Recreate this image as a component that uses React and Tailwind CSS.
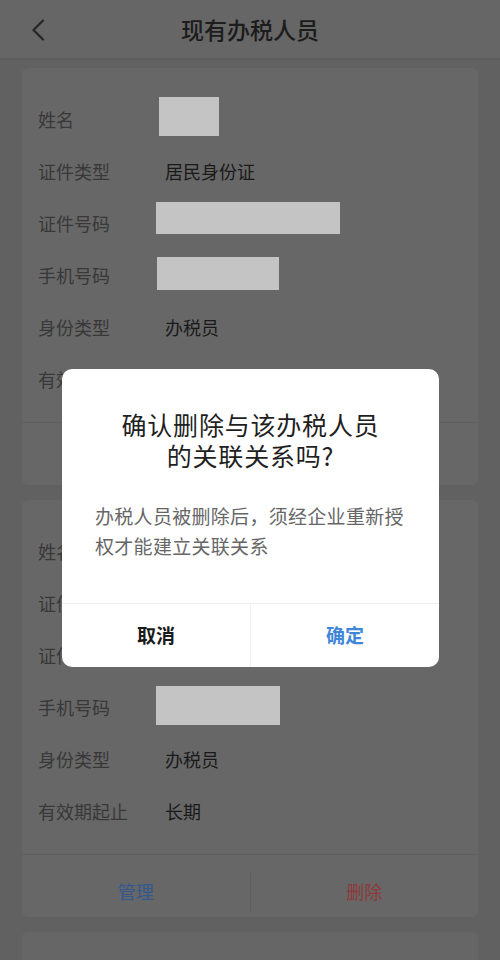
import React from "react";

const FONT = { fontFamily: '"Noto Sans CJK SC", "Noto Sans", sans-serif' };

function Row({ label, children }) {
  return (
    <div className="flex h-[52px] items-center">
      <div className="w-[127px] shrink-0 text-[18px] text-[#383838]">{label}</div>
      <div className="flex items-center text-[18px] text-[#1a1a1a]">{children}</div>
    </div>
  );
}

function Box({ className }) {
  return <div className={"bg-[#c4c4c4] " + className} />;
}

function Card({ top }) {
  return (
    <div className="mx-[22px] rounded-[6px] bg-[#676767]">
      <div className="pb-[17px] pl-[16px] pt-[25px]">{top}</div>
      <div className="flex h-[63px] items-center border-t border-[#5e5e5e] pt-[10px]">
        <div className="flex flex-1 justify-center text-[18px] text-[#33578f]">管理</div>
        <div className="h-[40px] w-px bg-[#5e5e5e]" />
        <div className="flex flex-1 justify-center text-[18px] text-[#8c3a3a]">删除</div>
      </div>
    </div>
  );
}

export default function App() {
  return (
    <div className="relative h-[960px] w-[500px] overflow-hidden bg-[#616161]" style={FONT}>
      <div className="relative flex h-[58px] items-center justify-center bg-[#666666] shadow-[0_1px_2px_rgba(0,0,0,0.08)]">
        <svg className="absolute left-[31px] top-[19px]" width="14" height="22" viewBox="0 0 14 22">
          <path d="M12 1.5 L2.5 11 L12 20.5" fill="none" stroke="#262626" strokeWidth="2.2" strokeLinecap="round" strokeLinejoin="round" />
        </svg>
        <div className="text-[23px] font-medium text-[#1c1c1c]">现有办税人员</div>
      </div>

      <div className="mt-[10px] flex flex-col gap-[15px]">
        <Card
          top={
            <>
              <Row label="姓名">
                <Box className="-ml-[6px] -mt-[5px] h-[39px] w-[60px]" />
              </Row>
              <Row label="证件类型">居民身份证</Row>
              <Row label="证件号码">
                <Box className="-ml-[9px] -mt-[10px] h-[32px] w-[184px]" />
              </Row>
              <Row label="手机号码">
                <Box className="-ml-[8px] -mt-[3px] h-[33px] w-[122px]" />
              </Row>
              <Row label="身份类型">办税员</Row>
              <Row label="有效期起止">长期</Row>
            </>
          }
        />
        <Card
          top={
            <>
              <Row label="姓名">
                <Box className="-ml-[6px] -mt-[5px] h-[39px] w-[60px]" />
              </Row>
              <Row label="证件类型">居民身份证</Row>
              <Row label="证件号码">
                <Box className="-ml-[9px] -mt-[10px] h-[32px] w-[184px]" />
              </Row>
              <Row label="手机号码">
                <Box className="-ml-[9px] -mt-[3px] h-[39px] w-[124px]" />
              </Row>
              <Row label="身份类型">办税员</Row>
              <Row label="有效期起止">长期</Row>
            </>
          }
        />
        <div className="mx-[22px] h-[60px] rounded-[6px] bg-[#666666]" />
      </div>

      <div className="absolute left-[62px] top-[369px] flex h-[298px] w-[377px] flex-col overflow-hidden rounded-[10px] bg-white">
        <div className="flex flex-col items-center pt-[40px] text-[25px] leading-[31px] tracking-[0.8px] text-[#1f1f1f]">
          <div>确认删除与该办税人员</div>
          <div>的关联关系吗?</div>
        </div>
        <div className="px-[33px] pt-[30px] text-[19px] leading-[30px] tracking-[0.3px] text-[#666666]">
          办税人员被删除后，须经企业重新授权才能建立关联关系
        </div>
        <div className="mt-auto flex h-[64px] items-center border-t border-[#efefef]">
          <div className="flex flex-1 justify-center text-[19px] font-bold text-[#1a1a1a]">取消</div>
          <div className="h-full w-px bg-[#f0f0f0]" />
          <div className="flex flex-1 justify-center text-[19px] font-bold text-[#3f86d8]">确定</div>
        </div>
      </div>
    </div>
  );
}
